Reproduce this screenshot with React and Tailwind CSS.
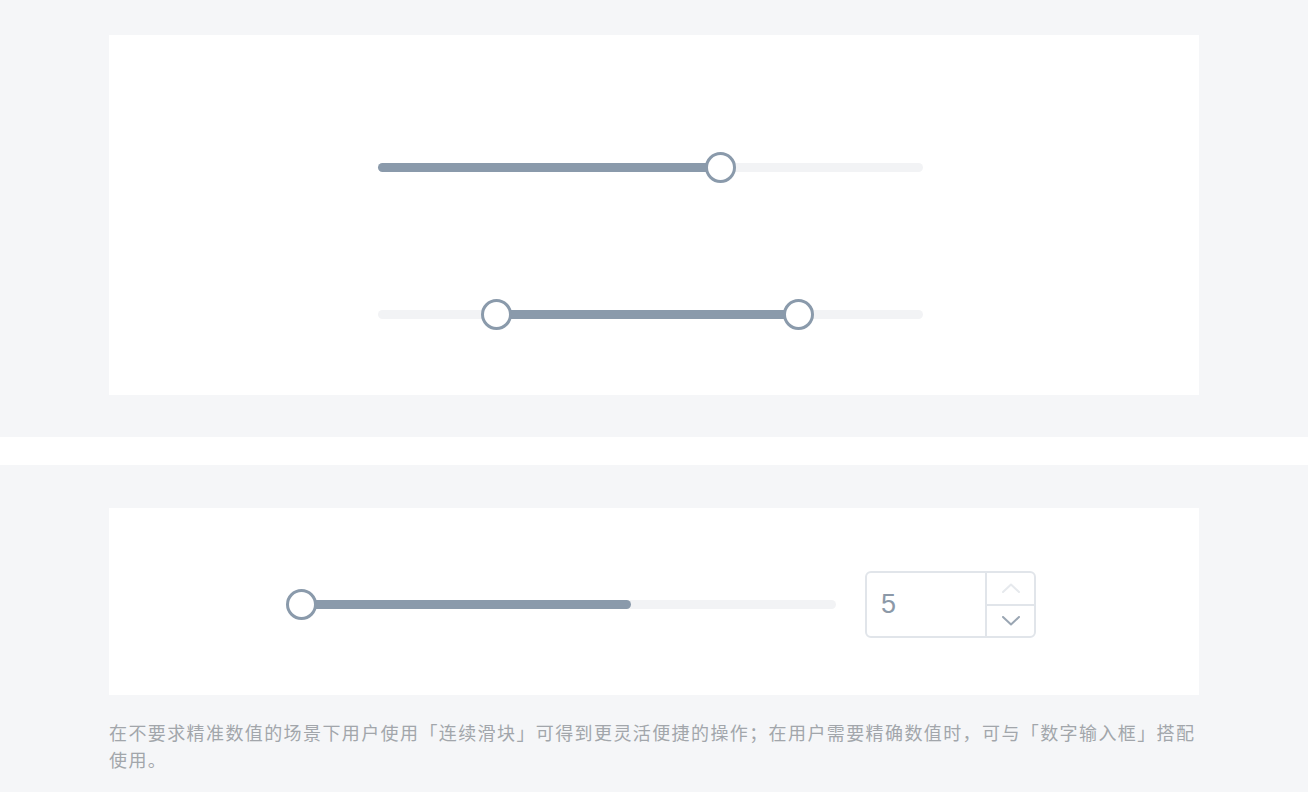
const Thumb = ({ left }) => (
  <div
    className="absolute top-1/2 w-[31px] h-[31px] -ml-[15.5px] -mt-[15.5px] rounded-full bg-white border-[3px] border-[#8a9aab]"
    style={{ left }}
  />
);

const Track = ({ width, from, to, rounded, thumbs }) => (
  <div className="relative h-[9px] rounded-full bg-[#f2f3f5]" style={{ width }}>
    <div
      className={`absolute top-0 h-full bg-[#8a9aab] ${rounded}`}
      style={{ left: from, width: `calc(${to} - ${from})` }}
    />
    {thumbs.map((t) => (
      <Thumb key={t} left={t} />
    ))}
  </div>
);

const Chevron = ({ up, color }) => (
  <svg width="18" height="10" viewBox="0 0 18 10" fill="none" stroke={color} strokeWidth="2" strokeLinecap="round" strokeLinejoin="round">
    {up ? <polyline points="1,9 9,1.5 17,9" /> : <polyline points="1,1 9,8.5 17,1" />}
  </svg>
);

const App = () => {
  return (
    <div className="min-h-screen bg-white font-['Liberation_Sans','Noto_Sans_CJK_SC',sans-serif]">
      <div className="bg-[#f5f6f8] pt-[35px] pb-[42px] px-[109px]">
        <div className="bg-white h-[360px] pl-[269px] pt-[128px] flex flex-col gap-[138px]">
          <Track width="545px" from="0%" to="62%" rounded="rounded-l-full" thumbs={["62.9%"]} />
          <Track width="545px" from="21.8%" to="77.2%" rounded="" thumbs={["21.8%", "77.1%"]} />
        </div>
      </div>
      <div className="h-[28px] bg-white" />
      <div className="bg-[#f5f6f8] pt-[43px] pb-[30px] px-[109px]">
        <div className="bg-white h-[187px] pl-[192px] pt-[63px]">
          <div className="flex items-center">
            <Track width="535px" from="0%" to="61.7%" rounded="rounded-full" thumbs={["0%"]} />
            <div className="ml-[29px] w-[171px] h-[67px] flex rounded-md border-2 border-[#e1e5ea] overflow-hidden">
              <div className="flex-1 flex items-center pl-[14px] text-[27px] text-[#8c99a8]">5</div>
              <div className="w-[49px] flex flex-col border-l-2 border-[#e1e5ea]">
                <div className="flex-1 flex items-center justify-center border-b-2 border-[#e1e5ea]">
                  <Chevron up color="#e6e9ed" />
                </div>
                <div className="flex-1 flex items-center justify-center">
                  <Chevron color="#9aa6b3" />
                </div>
              </div>
            </div>
          </div>
        </div>
        <p className="mt-[24px] text-[18px] leading-[27px] tracking-[1.4px] text-[#a2a6ab] font-['Noto_Sans_CJK_SC',sans-serif]">
          在不要求精准数值的场景下用户使用「连续滑块」可得到更灵活便捷的操作；在用户需要精确数值时，可与「数字输入框」搭配使用。
        </p>
      </div>
    </div>
  );
};

export default App;
